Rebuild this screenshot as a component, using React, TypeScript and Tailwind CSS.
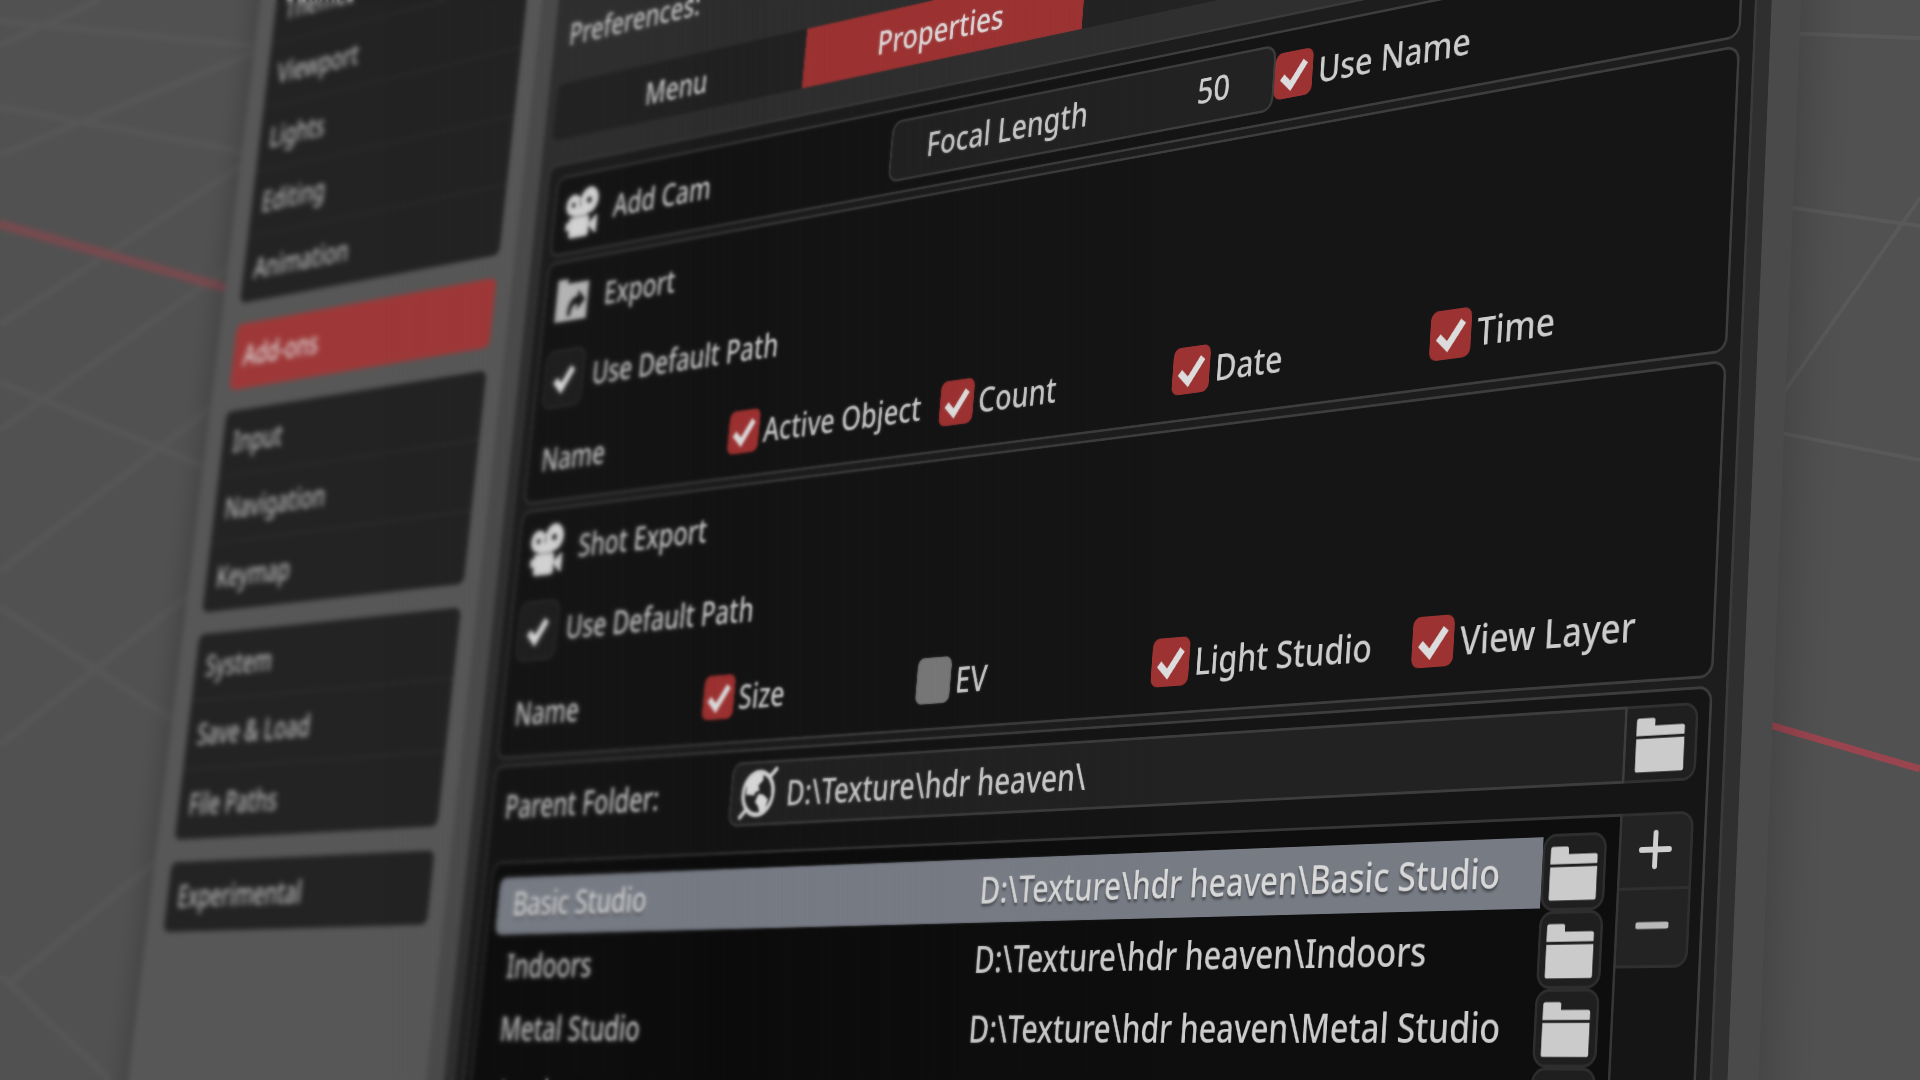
import type { ReactNode } from "react";

const navGroups = [
  ["Themes", "Viewport", "Lights", "Editing", "Animation"],
  ["Add-ons"],
  ["Input", "Navigation", "Keymap"],
  ["System", "Save & Load", "File Paths"],
  ["Experimental"],
];

const folders = ["Basic Studio", "Indoors", "Metal Studio", "Outdoors"];

function CameraIcon() {
  return (
    <svg viewBox="0 0 16 16" className="size-[72px] shrink-0" fill="#d2d2d2" aria-hidden="true">
      <path
        fillRule="evenodd"
        d="M4.300 2a3.300 3.300 0 1 0 0 6.600 3.300 3.300 0 0 0 0-6.600Zm0 2.500a.8.8 0 1 1 0 1.600.8.8 0 0 1 0-1.600ZM11.200.4a4.100 4.100 0 1 0 0 8.200 4.100 4.100 0 0 0 0-8.200Zm0 3.100a1 1 0 1 1 0 2 1 1 0 0 1 0-2Z"
      />
      <path d="M4.500 6.500h6.500v2.500H4.500z" />
      <path d="M3 9.200h8a1 1 0 0 1 1 1v4.400a1 1 0 0 1-1 1H4.200a1 1 0 0 1-1-1V13H1.600v-2.500H3z" />
      <path d="M12.300 11.500l2.300-2h.9v5.400h-.9l-2.300-2z" />
    </svg>
  );
}

function ExportIcon() {
  return (
    <svg viewBox="0 0 16 16" className="size-[72px] shrink-0" fill="#b4b4b4" aria-hidden="true">
      <path
        fillRule="evenodd"
        d="M1 1.500h4.500v1.500H15v11.500H1V1.500Zm5.200 11.500h1.600c0-2.300.9-3.300 2.700-3.400v2l3.300-3.100-3.300-3.200v1.900C7.600 7.500 6.200 9.500 6.200 13Z"
      />
    </svg>
  );
}

function GlobeIcon() {
  return (
    <svg viewBox="0 0 16 16" className="size-[68px] shrink-0" fill="none" stroke="#cfcfcf" aria-hidden="true">
      <circle cx="8" cy="8" r="6.200" strokeWidth="1.400" />
      <path d="M12.600 3.200 14.900 1.200M3.400 12.800 1.200 14.800" strokeWidth="1.400" strokeLinecap="round" />
      <path
        d="M3 4.500 6.500 2l3 .6.3 1.600-1.900 1.500.6 1.500-1.600.4-.5 1L3 8.200Z M8.200 8.200l2 .2 2.100 1.400-.7 2.400-2.200 1.700-.9-2-1.500-1.500Z"
        fill="#d6d6d6"
        stroke="none"
      />
    </svg>
  );
}

function FolderIcon() {
  return (
    <svg viewBox="0 0 16 16" className="size-[66px]" fill="#cbcbcb" aria-hidden="true">
      <path d="M.8 2.300Q.8 1.600 1.500 1.600H5.600Q6.300 1.600 6.300 2.300V3.500H14.400Q15.100 3.500 15.100 4.200V6H.8Z" />
      <path d="M.8 6.700H15.100V14.400Q15.100 15.100 14.400 15.100H1.500Q.8 15.100.8 14.400Z" />
    </svg>
  );
}

function Tick({ className }: { className: string }) {
  return (
    <svg viewBox="0 0 16 16" className={className} fill="none" stroke="#dcdcdc" aria-hidden="true">
      <path d="M3.200 8.500 6.900 11.900 12.800 4.200" />
    </svg>
  );
}

function Text({ children }: { children: ReactNode }) {
  return <span className="pb-1 whitespace-nowrap">{children}</span>;
}

function Check({ label, checked = true }: { label: string; checked?: boolean }) {
  return (
    <label className="flex h-20 items-center gap-2 whitespace-nowrap">
      <span className="relative size-14 shrink-0">
        <input
          type="checkbox"
          defaultChecked={checked}
          className="block size-14 appearance-none rounded-[10px] bg-[#777777] checked:bg-[#9c3232]"
        />
        {checked && <Tick className="pointer-events-none absolute inset-0 size-14 stroke-[2.500]" />}
      </span>
      {label}
    </label>
  );
}

function DefaultPath() {
  return (
    <label className="flex h-20 items-center gap-4">
      <span className="relative size-20 shrink-0">
        <input
          type="checkbox"
          defaultChecked
          className="block size-20 appearance-none rounded-2xl border-[3px] border-[#2c2c2c] bg-[#1f1f1f]"
        />
        <Tick className="pointer-events-none absolute inset-3 size-14 stroke-3" />
      </span>
      <Text>Use Default Path</Text>
    </label>
  );
}

function Box({ children }: { children: ReactNode }) {
  return (
    <section className="rounded-2xl border-[3px] border-[#3d3d3d] bg-[#151515] p-[13px]">{children}</section>
  );
}

function ActionButton({ icon, label }: { icon: ReactNode; label: string }) {
  return (
    <button type="button" className="flex h-20 items-center gap-7 pl-1 text-left">
      {icon}
      <Text>{label}</Text>
    </button>
  );
}

function FolderButton({ label, className }: { label: string; className: string }) {
  return (
    <button type="button" aria-label={label} className={className}>
      <FolderIcon />
    </button>
  );
}

function Backdrop() {
  return (
    <svg
      viewBox="0 0 1920 1080"
      preserveAspectRatio="none"
      className="absolute inset-0 size-full"
      fill="none"
      aria-hidden="true"
    >
      <g stroke="#565656" strokeWidth="7">
        <path d="M0 45 100 0M0 155 265 48M0 325 250 160M0 430 240 260M0 571 215 405M0 745 190 594M8 984 155 862M0 975 115 1085" />
        <path d="M0 21 255 46M0 107 250 153M0 382 210 469M0 607 175 721" />
      </g>
      <g stroke="#595959" strokeWidth="4">
        <path d="M1780 33 1920 38M1780 206 1920 226M1920 198 1780 398M1770 431 1920 460" />
      </g>
      <path d="M0 224 240 292" stroke="#784a4f" strokeWidth="9" />
      <path d="M1760 722 1920 769" stroke="#99454f" strokeWidth="7" />
    </svg>
  );
}

function Sidebar() {
  return (
    <nav className="flex w-[650px] shrink-0 flex-col gap-8 bg-[#575757] pt-[73px] pr-[33px] pl-10">
      {navGroups.map((group) => (
        <div key={group[0]} className="divide-y-4 divide-[#2a2a2a] overflow-hidden rounded-xl">
          {group.map((item) => (
            <button
              key={item}
              type="button"
              className={
                item === "Add-ons"
                  ? "flex h-[98px] w-full items-center bg-[#9e3838] px-6 pb-1 text-[#dddddd]"
                  : "flex h-[98px] w-full items-center bg-[#232323] px-6 pb-1 text-[#bbbbbb]"
              }
            >
              {item}
            </button>
          ))}
        </div>
      ))}
    </nav>
  );
}

function FolderList() {
  return (
    <div className="flex items-start">
      <ul className="flex-1 rounded-l-2xl border-[3px] border-[#363636] bg-[#0e0e0e] p-[15px]">
        {folders.map((name, i) => (
          <li key={name} className="flex h-20 items-center">
            <div
              className={
                i === 0
                  ? "grid h-[74px] flex-1 grid-cols-2 items-center rounded-l-xl bg-[#777b84] pb-1 pl-[30px] text-[#d8d8d8] [text-shadow:0_3px_3px_rgba(0,0,0,0.45)]"
                  : "grid h-[74px] flex-1 grid-cols-2 items-center pb-1 pl-[30px]"
              }
            >
              <Text>{name}</Text>
              <span className="pl-[14px] whitespace-nowrap">{"D:\\Texture\\hdr heaven\\" + name}</span>
            </div>
            <FolderButton
              label={"Browse " + name}
              className="flex size-20 items-center justify-center rounded-2xl border-[3px] border-[#2e2e2e] bg-[#1f1f1f]"
            />
          </li>
        ))}
      </ul>
      <div className="w-[87px] overflow-hidden rounded-r-2xl border-[3px] border-l-0 border-[#2f2f2f] bg-[#232323]">
        <button
          type="button"
          aria-label="Add folder"
          className="flex h-[76px] w-full items-center justify-center border-b-[3px] border-[#2f2f2f] pb-1"
        >
          <svg viewBox="0 0 40 40" className="size-10" stroke="#cfcfcf" strokeWidth="6" strokeLinecap="round" aria-hidden="true">
            <path d="M20 3V37M3 20H37" />
          </svg>
        </button>
        <button type="button" aria-label="Remove folder" className="flex h-[76px] w-full items-center justify-center pb-1">
          <svg viewBox="0 0 40 40" className="size-10" stroke="#b9b9b9" strokeWidth="7" strokeLinecap="round" aria-hidden="true">
            <path d="M3 20H37" />
          </svg>
        </button>
      </div>
    </div>
  );
}

function Settings() {
  return (
    <main className="flex-1 bg-[#4a4a4a] px-9">
      <div className="h-full bg-[#2f2f2f] px-[18px] pt-[224px]">
        <h1 className="flex h-20 items-center px-3">Preferences:</h1>
        <div className="mt-[31px] grid h-20 grid-cols-4 overflow-hidden rounded-xl bg-[#232323]">
          <button type="button">Menu</button>
          <button type="button" className="bg-[#9c3333] text-[#e0e0e0]">
            Properties
          </button>
        </div>
        <div className="mt-[35px] flex flex-col gap-2 rounded-t-2xl border-[3px] border-[#3a3a3a] bg-[#1d1d1d] p-4">
          <Box>
            <div className="grid grid-cols-3">
              <ActionButton icon={<CameraIcon />} label="Add Cam" />
              <label className="flex h-20 items-center justify-between rounded-2xl border-[3px] border-[#3d3d3d] bg-[#222222] pr-16 pb-1 pl-[60px]">
                Focal Length
                <input type="text" defaultValue="50" className="w-24 bg-transparent text-right outline-none" />
              </label>
              <Check label="Use Name" />
            </div>
          </Box>
          <Box>
            <div className="flex flex-col gap-7 pb-1">
              <ActionButton icon={<ExportIcon />} label="Export" />
              <DefaultPath />
              <div className="grid grid-cols-5 items-center">
                <span className="pl-3">Name</span>
                <Check label="Active Object" />
                <Check label="Count" />
                <Check label="Date" />
                <Check label="Time" />
              </div>
            </div>
          </Box>
          <Box>
            <div className="flex flex-col gap-7 pb-1">
              <ActionButton icon={<CameraIcon />} label="Shot Export" />
              <DefaultPath />
              <div className="grid grid-cols-5 items-center">
                <span className="pl-3">Name</span>
                <Check label="Size" />
                <Check label="EV" checked={false} />
                <Check label="Light Studio" />
                <Check label="View Layer" />
              </div>
            </div>
          </Box>
          <Box>
            <div className="flex flex-col gap-[31px]">
              <div className="flex h-20 items-stretch">
                <label htmlFor="parent-folder" className="flex w-[438px] items-center pl-3">
                  <Text>Parent Folder:</Text>
                </label>
                <div className="flex flex-1 items-center gap-4 rounded-l-2xl border-[3px] border-[#3d3d3d] bg-[#222222] pl-3">
                  <GlobeIcon />
                  <input
                    id="parent-folder"
                    type="text"
                    defaultValue={"D:\\Texture\\hdr heaven\\"}
                    className="min-w-0 flex-1 bg-transparent outline-none"
                  />
                </div>
                <FolderButton
                  label="Browse parent folder"
                  className="flex w-[87px] items-center justify-center rounded-r-2xl border-[3px] border-l-0 border-[#303030] bg-[#1f1f1f]"
                />
              </div>
              <FolderList />
            </div>
          </Box>
        </div>
      </div>
    </main>
  );
}

export default function App() {
  return (
    <div className="relative h-screen overflow-hidden bg-[#515151] font-['Noto_Sans','Open_Sans',sans-serif] text-[44px] leading-none font-medium text-[#cccccc]">
      <Backdrop />
      <div className="relative flex w-[140vw] origin-top-left [transform:matrix3d(0.3864,-0.109305,0,-0.000105,-0.0875726,0.6406536,0,-0.0000346,0,0,1,0,268,-60,0,1)] shadow-[0_0_60px_10px_rgba(0,0,0,0.22)]">
        <Sidebar />
        <Settings />
      </div>
      <div className="pointer-events-none absolute inset-y-0 left-0 w-3/5 backdrop-blur-[1px] [mask-image:linear-gradient(to_right,black_60%,transparent_100%)]" />
      <div className="pointer-events-none absolute inset-y-0 left-0 w-1/2 backdrop-blur-[1px] [mask-image:linear-gradient(to_right,black_65%,transparent_100%)]" />
      <div className="pointer-events-none absolute inset-y-0 left-0 w-2/5 backdrop-blur-[2px] [mask-image:linear-gradient(to_right,black_50%,transparent_100%)]" />
    </div>
  );
}
